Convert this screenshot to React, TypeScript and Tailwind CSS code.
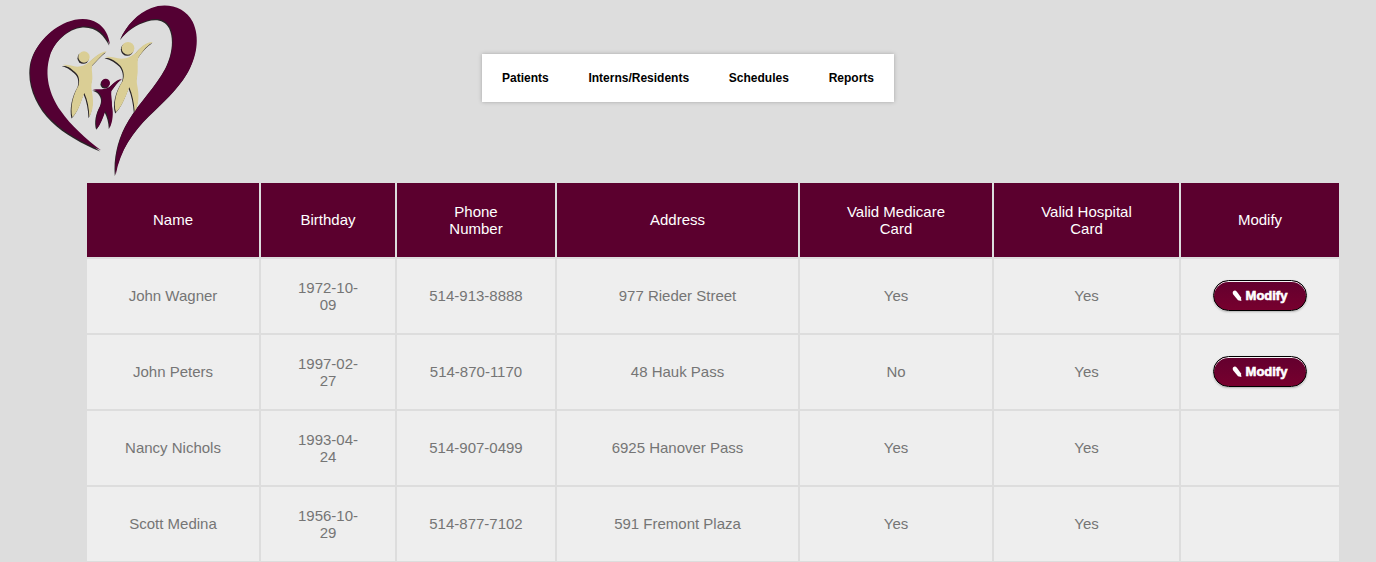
import React from "react";

const headings = ["Name", "Birthday", "Phone\nNumber", "Address", "Valid Medicare\nCard", "Valid Hospital\nCard", "Modify"];

const patients = [
  { name: "John Wagner", birthday: "1972-10-\n09", phone: "514-913-8888", address: "977 Rieder Street", medicare: "Yes", hospital: "Yes", editable: true },
  { name: "John Peters", birthday: "1997-02-\n27", phone: "514-870-1170", address: "48 Hauk Pass", medicare: "No", hospital: "Yes", editable: true },
  { name: "Nancy Nichols", birthday: "1993-04-\n24", phone: "514-907-0499", address: "6925 Hanover Pass", medicare: "Yes", hospital: "Yes", editable: false },
  { name: "Scott Medina", birthday: "1956-10-\n29", phone: "514-877-7102", address: "591 Fremont Plaza", medicare: "Yes", hospital: "Yes", editable: false },
];

function LogoShapes() {
  return (
    <>
      <g>
        <path d="M270 134C266 106 254 82 232 69C208 53 174 53 140 67C88 89 42 138 32 194C23 254 52 318 96 361C136 400 190 429 243 451C198 416 153 377 122 332C88 284 72 224 90 167C104 123 146 83 190 79C232 77 255 104 270 134Z" />
        <path d="M302 117C320 75 354 39 394 24C440 6 496 21 518 65C541 113 530 172 502 220C473 269 429 307 389 346C341 394 301 449 287 525C282 471 296 410 327 360C361 304 409 258 438 203C457 166 466 116 450 82C437 56 409 53 384 61C350 71 323 91 302 117Z" />
      </g>
      <g className="parents">
        <circle cx="192" cy="171" r="17" />
        <path d="M128 195C144 193 157 199 172 200C186 200 196 195 207 187C222 174 237 157 260 154C245 164 232 182 217 196C213 205 218 219 217 237C215 250 213 258 215 271C220 297 223 325 208 351C207 324 203 301 193 279C184 302 177 332 157 352C150 323 159 284 175 258C180 243 177 228 168 219C158 210 147 199 128 195Z" />
        <circle cx="324" cy="145" r="19" />
        <path d="M256 171C274 169 287 175 304 176C323 176 335 168 347 159C361 143 375 127 399 126C383 135 370 151 356 171C351 182 354 199 353 217C351 236 349 242 352 258C357 283 358 312 344 335C342 309 337 283 328 262C319 284 309 316 288 337C279 309 289 273 308 243C315 225 310 209 301 197C290 186 276 176 256 171Z" />
      </g>
      <g>
        <circle cx="257" cy="249" r="13" />
        <path d="M219 269C235 266 247 270 260 265C275 260 282 240 307 236C294 243 285 259 274 273C272 286 277 300 276 318C281 340 278 365 269 384C268 363 264 348 256 333C250 352 242 373 231 386C224 364 230 337 242 316C248 301 246 290 239 281C233 273 226 271 219 269Z" />
      </g>
    </>
  );
}

function FamilyLogo() {
  return (
    <svg viewBox="0 0 570 540" className="h-[180px] w-[190px] shrink-0" role="img">
      <g transform="translate(-2.500 3.500)" className="fill-[#292427] blur-[1.5px]">
        <LogoShapes />
      </g>
      <g className="fill-[#540033] [&_.parents]:fill-[#dace95]">
        <LogoShapes />
      </g>
    </svg>
  );
}

function ModifyButton() {
  return (
    <button className="flex h-[31px] w-[94px] items-center justify-center gap-1 rounded-full border border-black bg-linear-to-b from-[#63002e] to-[#77002e] pr-px text-[13px] leading-none font-bold text-white shadow-[inset_0_1px_0_rgba(255,255,255,0.95),0_1px_2px_rgba(0,0,0,0.25)]">
      <svg viewBox="0 0 10 12" className="h-3 w-[10px] fill-white">
        <path d="M1.200 1.200Q3.200-.2 4.900 1.800L8.900 7.300L9.400 11L6 10.200L1.300 4.600Q.2 2.700 1.200 1.200Z" />
      </svg>
      <span className="[-webkit-text-stroke:0.6px_white]">Modify</span>
    </button>
  );
}

function Cell({ children }: { children?: React.ReactNode }) {
  return <div className="flex items-center justify-center bg-[#eee] pb-px text-center whitespace-pre-line text-[#757575]">{children}</div>;
}

export default function App() {
  return (
    <div className="h-[562px] overflow-hidden bg-[#ddd] font-['Liberation_Sans',Arial,sans-serif]">
      <header className="flex h-[183px] items-start pl-5">
        <FamilyLogo />
        <nav className="mt-[54px] ml-[272px] flex h-12 w-[412px] items-center justify-between bg-white pr-5 pl-5 text-[12px] font-bold text-black shadow-[0_0_4px_rgba(0,0,0,0.25)]">
          <a>Patients</a>
          <a>Interns/Residents</a>
          <a>Schedules</a>
          <a>Reports</a>
        </nav>
      </header>
      <main className="ml-[87px] grid w-[1252px] auto-rows-[74px] grid-cols-[172px_134px_158px_241px_192px_185px_158px] gap-0.5 text-[15px] leading-[17px]">
        {headings.map((heading) => (
          <div key={heading} className="flex items-center justify-center bg-[#5b002e] pb-px text-center whitespace-pre-line text-white">
            {heading}
          </div>
        ))}
        {patients.map((patient) => (
          <React.Fragment key={patient.name}>
            <Cell>{patient.name}</Cell>
            <Cell>{patient.birthday}</Cell>
            <Cell>{patient.phone}</Cell>
            <Cell>{patient.address}</Cell>
            <Cell>{patient.medicare}</Cell>
            <Cell>{patient.hospital}</Cell>
            <Cell>{patient.editable && <ModifyButton />}</Cell>
          </React.Fragment>
        ))}
      </main>
    </div>
  );
}
